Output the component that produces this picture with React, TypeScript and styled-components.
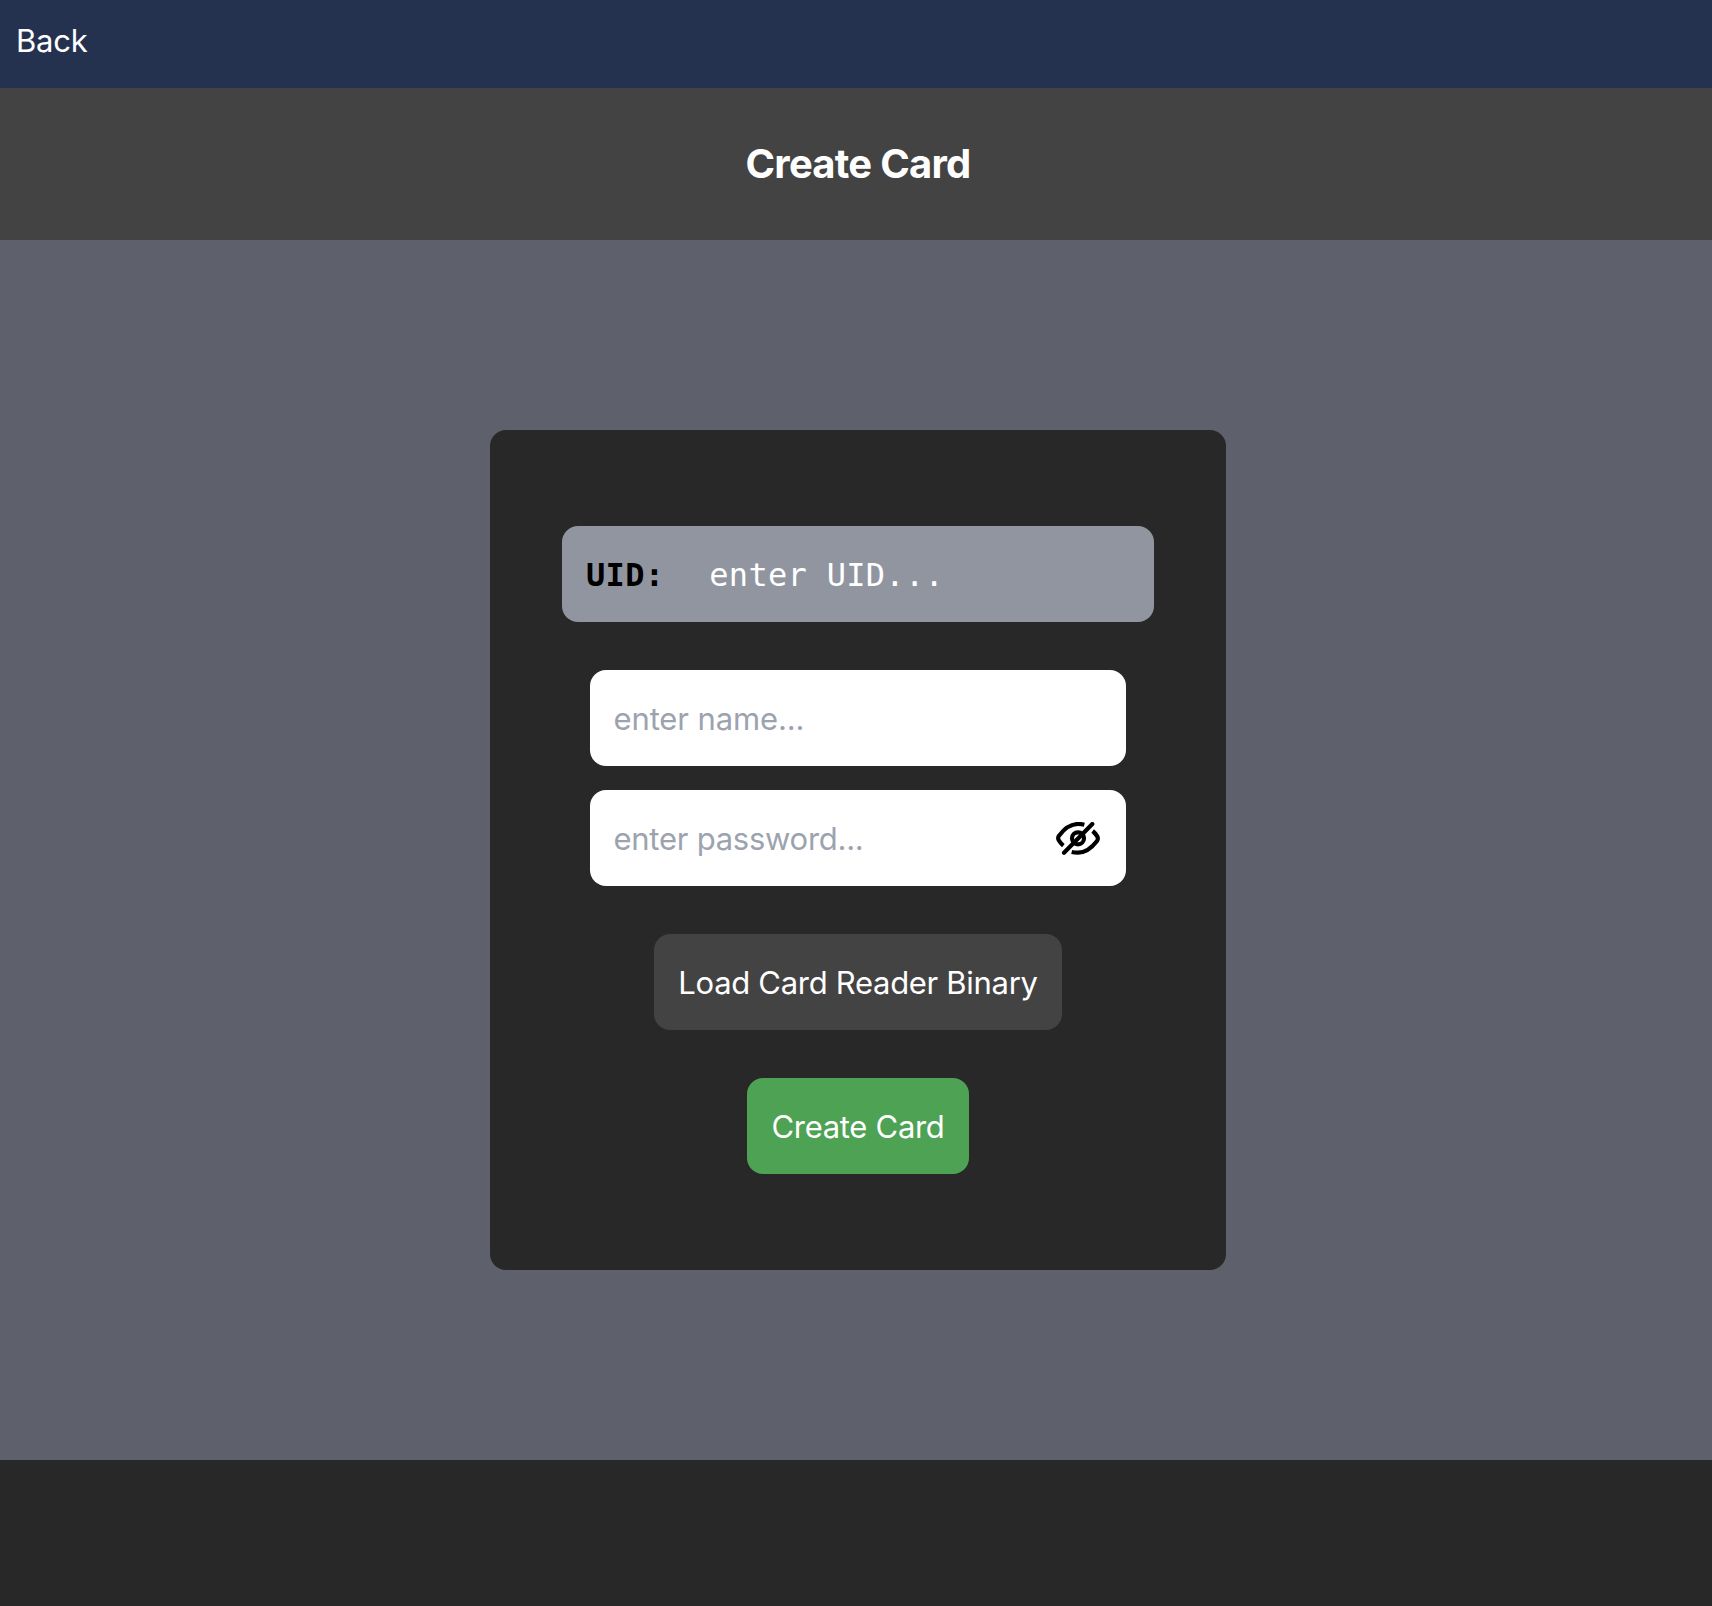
import React, { useState } from "react";
import styled, { createGlobalStyle, css } from "styled-components";

const GlobalStyle = createGlobalStyle`
  *, *::before, *::after { box-sizing: border-box; }
  html, body { margin: 0; padding: 0; overflow: hidden; }
  body {
    background: #282828;
    font-family: Inter, "Liberation Sans", sans-serif;
    font-size: 31px;
    line-height: 48px;
    color: #ffffff;
  }
`;

const Page = styled.div`
  display: flex;
  flex-direction: column;
  width: 1716px;
  height: 1606px;
`;

const NavBar = styled.nav`
  display: flex;
  align-items: flex-start;
  height: 88px;
  padding: 17px 16px 0;
  background: #25324f;
`;

const BackLink = styled.a`
  color: #ffffff;
  text-decoration: none;
  letter-spacing: -0.2px;
`;

const TitleBar = styled.header`
  display: flex;
  align-items: center;
  justify-content: center;
  height: 152px;
  background: #434343;
`;

const Title = styled.h1`
  margin: 0;
  font-size: 40px;
  line-height: 56px;
  font-weight: 700;
  letter-spacing: -0.75px;
`;

const Main = styled.main`
  display: flex;
  align-items: center;
  justify-content: center;
  height: 1220px;
  background: #5e606c;
`;

const Card = styled.form`
  display: flex;
  flex-direction: column;
  align-items: center;
  gap: 48px;
  width: 736px;
  padding: 96px 72px;
  border-radius: 16px;
  background: #282828;
`;

const fieldBox = css`
  display: flex;
  align-items: center;
  height: 96px;
  padding: 0 24px;
  border-radius: 16px;
`;

const UidField = styled.label`
  ${fieldBox}
  width: 100%;
  padding-top: 2px;
  gap: 45px;
  background: #9195a0;
  font-family: "DejaVu Sans Mono", monospace;
  font-size: 32px;
  letter-spacing: 0.3px;
`;

const UidLabel = styled.span`
  color: #000000;
  font-weight: 700;
`;

const Credentials = styled.div`
  display: flex;
  flex-direction: column;
  gap: 24px;
  width: 536px;
`;

const Field = styled.div`
  ${fieldBox}
  padding-left: 23.5px;
  background: #ffffff;
`;

const Input = styled.input<{ $placeholder: string; $tracking: string; $drop?: number }>`
  flex: 1;
  min-width: 0;
  height: 48px;
  padding: ${(p) => p.$drop ?? 0}px 0 0;
  border: 0;
  outline: 0;
  background: transparent;
  font: inherit;
  letter-spacing: ${(p) => p.$tracking};
  &::placeholder {
    color: ${(p) => p.$placeholder};
    opacity: 1;
  }
`;

const ToggleButton = styled.button`
  display: flex;
  align-items: center;
  justify-content: center;
  width: 48px;
  height: 48px;
  padding: 0;
  border: 0;
  background: transparent;
  color: #000000;
`;

const Button = styled.button<{ $width: number; $color: string }>`
  width: ${(p) => p.$width}px;
  height: 96px;
  padding: 1px 0 0;
  border: 0;
  border-radius: 16px;
  background: ${(p) => p.$color};
  color: #ffffff;
  font: inherit;
  letter-spacing: -0.3px;
  white-space: nowrap;
`;

const EyeOffIcon = () => (
  <svg width="44" height="33" viewBox="0 0 132 99" fill="none" stroke="currentColor" strokeWidth="12.500">
    <path d="M85 8C79 6.500 72 6 66 6C42 6 22 24 9 41C5 47 5 50 9 56C13 62 17 67 22 71" />
    <path d="M47 90C53 91.500 60 92 66 92C90 92 110 74 123 57C127 51 127 48 123 42C119 36 115 31 110 27" />
    <circle cx="66" cy="49" r="18" />
    <path d="M24 92L109 6" strokeLinecap="round" />
  </svg>
);

export default function App() {
  const [visible, setVisible] = useState(false);

  return (
    <>
      <GlobalStyle />
      <Page>
        <NavBar>
          <BackLink>Back</BackLink>
        </NavBar>
        <TitleBar>
          <Title>Create Card</Title>
        </TitleBar>
        <Main>
          <Card onSubmit={(e) => e.preventDefault()}>
            <UidField>
              <UidLabel>UID:</UidLabel>
              <Input placeholder="enter UID..." $placeholder="#ffffff" $tracking="0.3px" />
            </UidField>
            <Credentials>
              <Field>
                <Input placeholder="enter name..." $placeholder="#9ca3af" $tracking="-0.12px" $drop={1} />
              </Field>
              <Field>
                <Input
                  type={visible ? "text" : "password"}
                  placeholder="enter password..."
                  $placeholder="#9ca3af"
                  $tracking="-0.26px"
                  $drop={1}
                />
                <ToggleButton type="button" onClick={() => setVisible(!visible)}>
                  <EyeOffIcon />
                </ToggleButton>
              </Field>
            </Credentials>
            <Button type="button" $width={408} $color="#434343">
              Load Card Reader Binary
            </Button>
            <Button type="submit" $width={222} $color="#4da254">
              Create Card
            </Button>
          </Card>
        </Main>
      </Page>
    </>
  );
}
